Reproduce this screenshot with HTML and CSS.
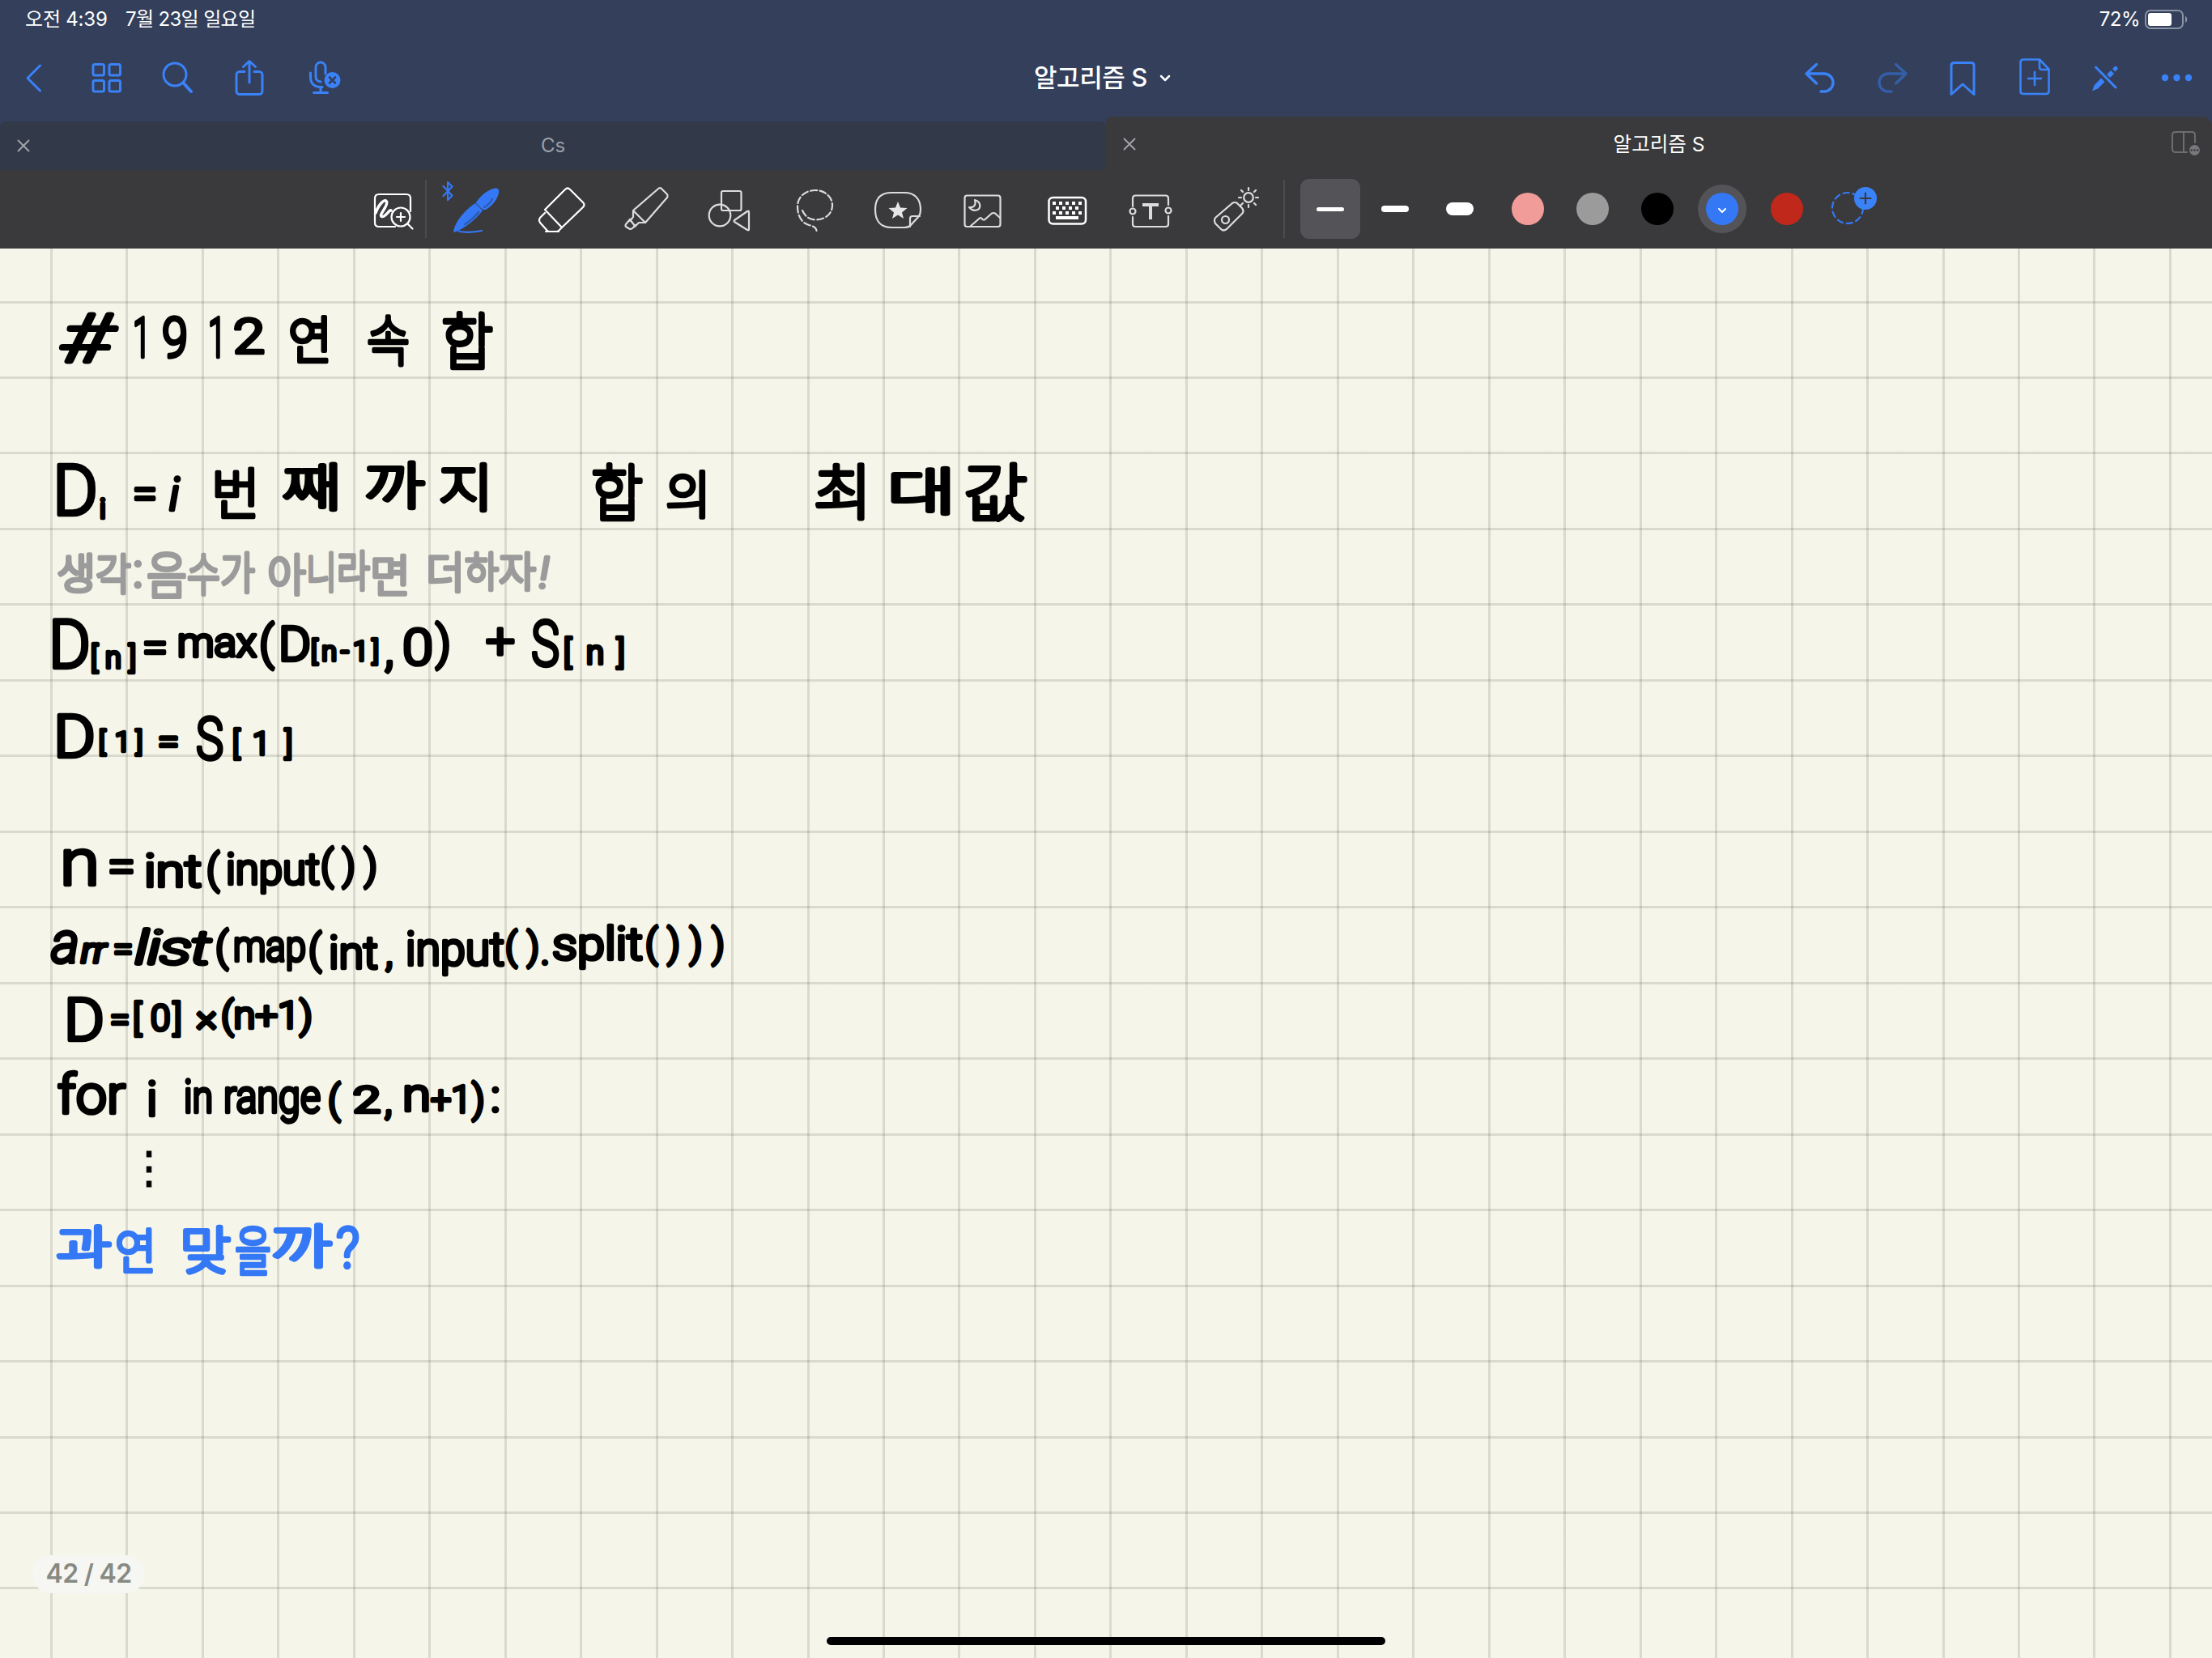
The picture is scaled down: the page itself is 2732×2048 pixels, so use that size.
FILE: index.html
```html
<!DOCTYPE html>
<html lang="ko">
<head>
<meta charset="utf-8">
<title>알고리즘 S</title>
<link rel="stylesheet" href="styles.css">
</head>
<body>
<header class="top">
  <div class="status">
    <span class="clock">오전 4:39</span>
    <span class="date">7월 23일 일요일</span>
    <span class="battery-text">72%</span>
    <svg class="battery" viewBox="2648 11 56 26"><rect x="2650" y="13" width="46" height="22" rx="6" fill="none" stroke="#8b92a2" stroke-width="2"/><rect x="2653" y="16" width="29" height="16" rx="3" fill="#fff"/><path d="M2699 20c3 1 3 7 0 8z" fill="#8b92a2"/></svg>
  </div>
  <nav class="nav">
    <div class="group left">
      <svg viewBox="12 66 60 60"><path d="M49.500 81L34 96.500L49.500 112"/></svg>
      <svg viewBox="101 66 60 60"><rect x="115" y="79.500" width="13.500" height="13.500" rx="2"/><rect x="135" y="79.500" width="13.500" height="13.500" rx="2"/><rect x="115" y="99.500" width="13.500" height="13.500" rx="2"/><rect x="135" y="99.500" width="13.500" height="13.500" rx="2"/></svg>
      <svg viewBox="190 66 60 60"><circle cx="216" cy="92" r="14"/><path d="M227 103L236 113" stroke-width="4"/></svg>
      <svg viewBox="279 66 60 60"><path d="M302 88.500h-6a4 4 0 0 0-4 4v20a4 4 0 0 0 4 4h24a4 4 0 0 0 4-4v-20a4 4 0 0 0-4-4h-6M308 102V76M300.500 82.500L308 75.500L315.500 82.500"/></svg>
      <svg viewBox="368 66 60 60"><path d="M402 91V83a6 6 0 0 0-12 0V95q0 5 6 6M383.500 90v5q0 12 12.500 12.500h2M396 108v6M387.500 114.500h17"/><circle cx="410.500" cy="99" r="10" fill="#3a82f7" stroke="none"/><path class="cut" d="M407 95.500l7 7m0-7l-7 7"/></svg>
    </div>
    <div class="title">알고리즘 S <svg viewBox="1430 88 18 16"><path d="M1434 94l5 5l5-5"/></svg></div>
    <div class="group right">
      <svg viewBox="2218 66 60 60"><path d="M2243.500 79.500L2231 91L2243.500 103M2231 91h22a11 11 0 0 1 0 22h-4" stroke-width="3.400"/></svg>
      <svg class="off" viewBox="2306 66 60 60"><path d="M2341.500 79.500L2354 91L2341.500 103M2354 91h-22a11 11 0 0 0 0 22h4" stroke-width="3.400"/></svg>
      <svg viewBox="2394 66 60 60"><path d="M2410 116.500V81q0-3.500 3.500-3.500h21q3.500 0 3.500 3.500V116.500L2424 104z"/></svg>
      <svg viewBox="2482 66 60 60"><path d="M2519 73.500h-20q-3.500 0-3.500 3.500v35.500q0 3.500 3.500 3.500h28q3.500 0 3.500-3.500v-27zM2519 74v9q0 3 3 3h8M2513 89v16M2505 97h16" stroke-width="2.600"/></svg>
      <svg viewBox="2570 66 60 60"><path d="M2588.500 83L2613 108" stroke-width="3"/><path d="M2595 96.500l4.500 4.500-8.500 8.500-7 3 2.500-7zM2602 92l5-5 4 4-5 5zM2609 85l2-2q2-2.500 4 0 1.500 2-1 4l-1.500 1.500z" fill="#3a82f7" stroke="none"/></svg>
      <svg viewBox="2658 66 60 60"><g fill="#3a82f7" stroke="none"><circle cx="2674" cy="96" r="4.200"/><circle cx="2688.500" cy="96" r="4.200"/><circle cx="2703" cy="96" r="4.200"/></g></svg>
    </div>
  </nav>
  <div class="tabs">
    <div class="tab idle"><svg class="close" viewBox="0 0 16 16"><path d="M1.500 1.500l13 13m0-13l-13 13"/></svg><span>Cs</span></div>
    <div class="tab current"><svg class="close" viewBox="0 0 16 16"><path d="M1.500 1.500l13 13m0-13l-13 13"/></svg><span>알고리즘 S</span>
      <svg class="split" viewBox="2680 160 40 36"><path d="M2711 177v-9q0-4-4-4h-20q-4 0-4 4v17q0 4 4 4h14M2697 164v25"/><circle cx="2710.500" cy="186.500" r="6.500"/><g class="eyes"><circle cx="2706.700" cy="186.500" r="1.300"/><circle cx="2710.500" cy="186.500" r="1.300"/><circle cx="2714.300" cy="186.500" r="1.300"/></g></svg>
    </div>
  </div>
</header>
<div class="tools">
  <svg class="zoomer" viewBox="446 220 79 80"><path d="M488 280h-20q-5 0-5-5V245q0-5 5-5h34q5 0 5 5v16"/><path d="M464 263C467 254 475 244 477.500 249S467 266 471.500 267.500S481 258 483 260" stroke-width="3.500"/><circle cx="495" cy="268" r="11.500"/><path d="M490 268h10M495 263v10M503.500 276.500l6 6"/></svg>
  <i class="rule"></i>
  <div class="pens">
    <svg viewBox="545 220 80 80"><path d="M547.500 230l11 11.500-5.500 5.500v-22l5.500 5.500-11 11.500" fill="none" stroke="#3478f6" stroke-width="2.200"/><path d="M560.500 284C563 272 577 257 587 251L596 260C588 271 573 282 564 286Q559 288 560.500 284zM588 250C594 241 604 233 612 232.500Q617 232 616 238C615 246 607 255 600 259Q597 260 594 257L589 252Q587.500 251 588 250z" fill="#3478f6" stroke="none"/><path d="M598 256q6-3 10-10M574 277q10-6 17-15" stroke="#2b5cb4" stroke-width="2.500"/><path d="M567 286q14 2 28-1" stroke="#3478f6"/></svg>
    <svg class="bright" viewBox="649 220 80 80"><path d="M698 234q3-3 6 0l16 16q3 3 0 6L694 281L673 259zM673 263l-6 6q-2 3 0 6l9 10q1 1 3 1h8q2 0 3-1l4-4M674 286h16"/></svg>
    <svg viewBox="753 220 80 80"><path d="M812 234q3-3 5-1l7 7q1 2 0 4L797 275L782 260zM782 260v8l-4 5M797 275h-8l-5 5M778 271l-5 6q-1 2 0 3l5 3q2 0 3-1l4-4M778 271l6 8"/></svg>
    <svg viewBox="857 220 80 80"><rect x="891" y="236" width="24.500" height="24" rx="2"/><circle cx="889" cy="266" r="13.300"/><path d="M923 261q2-1 2 1v21q0 2-2 1l-16-10q-1-1 0-2z"/></svg>
    <svg viewBox="961 220 80 80"><path d="M991 260q5 11 16 11.500c13 0 21-8 21-18s-9-18.500-21-18.500-22 8-22 20c0 14 7 21 14 23q9 2 9.500 7" stroke-dasharray="8 3.500"/></svg>
    <svg viewBox="1065 220 80 80"><path d="M1101 238h16c13 0 20 8 20 21q0 5-2 8l-11 12q-3 2-7 2h-16c-13 0-20-8-20-22s7-21 20-21zM1124 280v-10q0-3 3-3h9"/><path d="M1109 249l3 7.500 8.500.500-6.500 5.500 2 7.500-7-4.500-7 4.500 2-7.500-6.500-5.500 8.500-.500z" fill="#e6e6e8" stroke="none"/></svg>
    <svg viewBox="1169 220 80 80"><rect x="1191.500" y="241.500" width="44" height="38.500" rx="3"/><path d="M1199 279l11-9.500q2-1 4 2l2 0 9-8q2-1 4 0l6 5.500M1204 247c5 1 7 5 6 9s-8 6-13 0c5 1 9-2 7-9z"/></svg>
    <svg class="bright" viewBox="1273 220 80 80"><rect x="1295.500" y="244" width="45.500" height="32.500" rx="5" stroke-width="2.500"/><path d="M1300 251h37M1304 257h31M1300 263h37" stroke-width="4" stroke-dasharray="4 4" stroke-linecap="butt"/><path d="M1304 269h28" stroke-width="4" stroke-linecap="butt"/></svg>
    <svg viewBox="1377 220 80 80"><path d="M1399 255v-10q0-3.500 3.500-3.500h37q3.500 0 3.500 3.500v8M1443 267v10q0 3-3.500 3h-37q-3.500 0-3.500-3v-9"/><circle cx="1399" cy="261" r="3.500"/><circle cx="1443" cy="260" r="3.500"/><path d="M1411 253h20M1421 253v18" stroke-width="4" stroke-linecap="butt"/></svg>
    <svg viewBox="1481 220 80 80"><path d="M1522 251q3-2 6 0l6 6q3 4 0 7l-19 19q-4 3-7 0l-7-7q-2-4 0-7zM1532 254l3-3"/><circle cx="1513.500" cy="271.500" r="4.500"/><circle cx="1542" cy="244" r="5.800"/><path d="M1542 232v3M1542 253v3M1530 244h3M1551 244h3M1533 235l2 2M1549 251l2 2M1551 235l-2 2"/></svg>
  </div>
  <i class="rule end"></i>
  <div class="sizes"><b class="size on"><i class="thin"></i></b><b class="size"><i class="mid"></i></b><b class="size"><i class="thick"></i></b></div>
  <div class="inks">
    <b class="ink"><i class="pink"></i></b><b class="ink"><i class="grey"></i></b><b class="ink"><i class="black"></i></b>
    <b class="ink on"><i class="blue"><svg viewBox="0 0 12 8"><path d="M2 2l4 4l4-4"/></svg></i></b><b class="ink"><i class="red"></i></b>
    <svg class="add" viewBox="2257 228 60 60"><circle cx="2282" cy="257" r="19" stroke-dasharray="7 4.930"/><circle cx="2304" cy="245" r="14" fill="#3a82f7" stroke="none"/><path d="M2297.500 245h13M2304 238.500v13" stroke="#3a3a3c"/></svg>
  </div>
</div>
<main class="page">
<svg class="ink-layer" viewBox="0 307 2732 1741">
  <g class="hand">
    <text class="wide" x="76" y="446" font-size="82" textLength="60" lengthAdjust="spacingAndGlyphs" font-style="italic">#</text>
    <text x="164" y="441" font-size="68" textLength="22" lengthAdjust="spacingAndGlyphs">1</text>
    <text x="200" y="441" font-size="68" textLength="32" lengthAdjust="spacingAndGlyphs">9</text>
    <text x="257" y="441" font-size="68" textLength="22" lengthAdjust="spacingAndGlyphs">1</text>
    <text x="288" y="436" font-size="60" textLength="39" lengthAdjust="spacingAndGlyphs">2</text>
    <text x="356" y="443" font-size="63" textLength="54" lengthAdjust="spacingAndGlyphs">연</text>
    <text x="453" y="446" font-size="68" textLength="53" lengthAdjust="spacingAndGlyphs">속</text>
    <text class="wide" x="545" y="450" font-size="76" textLength="64" lengthAdjust="spacingAndGlyphs">합</text>

    <text x="65" y="636" font-size="87" textLength="56" lengthAdjust="spacingAndGlyphs">D</text>
    <text x="123" y="640" font-size="34">i</text>
    <text x="164" y="628" font-size="54" textLength="30" lengthAdjust="spacingAndGlyphs">=</text>
    <text x="209" y="630" font-size="56" font-style="italic">i</text>
    <text x="261" y="635" font-size="68" textLength="60" lengthAdjust="spacingAndGlyphs">번</text>
    <text class="wide" x="349" y="625" font-size="62" textLength="73" lengthAdjust="spacingAndGlyphs">째</text>
    <text class="wide" x="450" y="623" font-size="62" textLength="74" lengthAdjust="spacingAndGlyphs">까</text>
    <text class="wide" x="542" y="625" font-size="63" textLength="67" lengthAdjust="spacingAndGlyphs">지</text>
    <text class="wide" x="730" y="637" font-size="76" textLength="64" lengthAdjust="spacingAndGlyphs">합</text>
    <text x="822" y="634" font-size="63" textLength="56" lengthAdjust="spacingAndGlyphs">의</text>
    <text class="wide" x="1005" y="635" font-size="74" textLength="72" lengthAdjust="spacingAndGlyphs">최</text>
    <text class="wide" x="1096" y="630" font-size="62" textLength="84" lengthAdjust="spacingAndGlyphs">대</text>
    <text class="wide" x="1190" y="637" font-size="77" textLength="79" lengthAdjust="spacingAndGlyphs">값</text>

    <text x="60" y="825" font-size="83" textLength="52" lengthAdjust="spacingAndGlyphs">D</text>
    <text x="112" y="825" font-size="36" textLength="56">[n]</text>
    <text x="176" y="818" font-size="54" textLength="31" lengthAdjust="spacingAndGlyphs">=</text>
    <text x="219" y="811" font-size="50" textLength="98" lengthAdjust="spacingAndGlyphs">max</text>
    <text x="320" y="814" font-size="58">(</text>
    <text x="344" y="816" font-size="60" textLength="40" lengthAdjust="spacingAndGlyphs">D</text>
    <text x="384" y="816" font-size="34" textLength="84">[n-1]</text>
    <text x="475" y="823" font-size="60">,</text>
    <text x="497" y="821" font-size="62" textLength="38" lengthAdjust="spacingAndGlyphs">0</text>
    <text x="538" y="814" font-size="58">)</text>
    <text x="600" y="813" font-size="62" textLength="36" lengthAdjust="spacingAndGlyphs">+</text>
    <text x="656" y="822" font-size="78" textLength="35" lengthAdjust="spacingAndGlyphs">S</text>
    <text x="696 724 762" y="820" font-size="40">[n]</text>

    <text x="66" y="935" font-size="72" textLength="52" lengthAdjust="spacingAndGlyphs">D</text>
    <text x="122 142 168" y="928" font-size="34">[1]</text>
    <text x="195" y="931" font-size="44" textLength="26" lengthAdjust="spacingAndGlyphs">=</text>
    <text x="242" y="938" font-size="72" textLength="34" lengthAdjust="spacingAndGlyphs">S</text>
    <text x="287 312 352" y="932" font-size="38">[1]</text>

    <text x="74" y="1093" font-size="80" textLength="49" lengthAdjust="spacingAndGlyphs">n</text>
    <text x="133" y="1090" font-size="58" textLength="34" lengthAdjust="spacingAndGlyphs">=</text>
    <text x="178" y="1095" font-size="56" textLength="71" lengthAdjust="spacingAndGlyphs">int</text>
    <text x="255" y="1091" font-size="50">(</text>
    <text x="279" y="1092" font-size="54" textLength="116" lengthAdjust="spacingAndGlyphs">input</text>
    <text x="396" y="1086" font-size="50" textLength="70">())</text>

    <text x="63" y="1189" font-size="72" textLength="35" lengthAdjust="spacingAndGlyphs" font-style="italic">a</text>
    <text x="100" y="1189" font-size="42" textLength="31" lengthAdjust="spacingAndGlyphs" font-style="italic">rr</text>
    <text x="140" y="1187" font-size="42" textLength="24" lengthAdjust="spacingAndGlyphs">=</text>
    <text class="wide" x="167" y="1190" font-size="56" textLength="93" lengthAdjust="spacingAndGlyphs" font-style="italic">list</text>
    <text x="266" y="1187" font-size="50">(</text>
    <text x="288" y="1187" font-size="54" textLength="90" lengthAdjust="spacingAndGlyphs">map</text>
    <text x="381" y="1190" font-size="50">(</text>
    <text x="406" y="1196" font-size="56" textLength="61" lengthAdjust="spacingAndGlyphs">int</text>
    <text x="476" y="1193" font-size="48">,</text>
    <text x="501" y="1192" font-size="58" textLength="122" lengthAdjust="spacingAndGlyphs">input</text>
    <text x="624" y="1185" font-size="46" textLength="42">()</text>
    <text x="668" y="1191" font-size="44">.</text>
    <text x="682" y="1185" font-size="56" textLength="112" lengthAdjust="spacingAndGlyphs">split</text>
    <text x="797" y="1182" font-size="48" textLength="98">()))</text>

    <text x="79" y="1285" font-size="72" textLength="50" lengthAdjust="spacingAndGlyphs">D</text>
    <text x="136" y="1274" font-size="42" textLength="24" lengthAdjust="spacingAndGlyphs">=</text>
    <text x="164 186 214" y="1273" font-size="44">[0]</text>
    <text x="242" y="1273" font-size="46" textLength="26" lengthAdjust="spacingAndGlyphs">×</text>
    <text x="273" y="1270" font-size="47" textLength="113" lengthAdjust="spacingAndGlyphs">(n+1)</text>

    <text x="71" y="1375" font-size="66" textLength="84" lengthAdjust="spacingAndGlyphs">for</text>
    <text x="181" y="1378" font-size="60">i</text>
    <text x="227" y="1374" font-size="56" textLength="36" lengthAdjust="spacingAndGlyphs">in</text>
    <text x="276" y="1374" font-size="58" textLength="120" lengthAdjust="spacingAndGlyphs">range</text>
    <text x="405" y="1375" font-size="48">(</text>
    <text x="436" y="1374" font-size="44" textLength="34" lengthAdjust="spacingAndGlyphs">2</text>
    <text x="475" y="1376" font-size="48">,</text>
    <text x="497" y="1372" font-size="58" textLength="35" lengthAdjust="spacingAndGlyphs">n</text>
    <text x="532" y="1374" font-size="46" textLength="50" lengthAdjust="spacingAndGlyphs">+1</text>
    <text x="583" y="1374" font-size="48">)</text>
    <text x="606" y="1373" font-size="56">:</text>
    <text class="dots" x="184" y="1461" font-size="54" text-anchor="middle">⋮</text>
  </g>
  <g class="hand pencil">
    <text x="70" y="727" font-size="51" textLength="48" lengthAdjust="spacingAndGlyphs">생</text>
    <text x="118" y="729" font-size="53" textLength="44" lengthAdjust="spacingAndGlyphs">각</text>
    <text x="164" y="725" font-size="60">:</text>
    <text x="181" y="734" font-size="62" textLength="50" lengthAdjust="spacingAndGlyphs">음</text>
    <text x="231" y="730" font-size="57" textLength="41" lengthAdjust="spacingAndGlyphs">수</text>
    <text x="272" y="728" font-size="54" textLength="43" lengthAdjust="spacingAndGlyphs">가</text>
    <text x="330" y="730" font-size="55" textLength="48" lengthAdjust="spacingAndGlyphs">아</text>
    <text x="378" y="727" font-size="53" textLength="38" lengthAdjust="spacingAndGlyphs">니</text>
    <text x="416" y="725" font-size="53" textLength="41" lengthAdjust="spacingAndGlyphs">라</text>
    <text x="457" y="731" font-size="55" textLength="50" lengthAdjust="spacingAndGlyphs">면</text>
    <text x="526" y="727" font-size="53" textLength="48" lengthAdjust="spacingAndGlyphs">더</text>
    <text x="574" y="725" font-size="51" textLength="42" lengthAdjust="spacingAndGlyphs">하</text>
    <text x="616" y="725" font-size="51" textLength="46" lengthAdjust="spacingAndGlyphs">자</text>
    <text x="666" y="726" font-size="54" font-style="italic">!</text>
  </g>
  <g class="hand blue-pen">
    <text class="wide" x="70" y="1560" font-size="55" textLength="67" lengthAdjust="spacingAndGlyphs">과</text>
    <text x="142" y="1568" font-size="60" textLength="51" lengthAdjust="spacingAndGlyphs">연</text>
    <text class="wide" x="222" y="1567" font-size="63" textLength="63" lengthAdjust="spacingAndGlyphs">맞</text>
    <text x="290" y="1570" font-size="67" textLength="45" lengthAdjust="spacingAndGlyphs">을</text>
    <text class="wide" x="335" y="1560" font-size="57" textLength="74" lengthAdjust="spacingAndGlyphs">까</text>
    <text x="415" y="1566" font-size="70" textLength="29" lengthAdjust="spacingAndGlyphs">?</text>
  </g>
</svg>
<div class="count">42 / 42</div>
<div class="home"></div>
</main>
</body>
</html>
```
FILE: styles.css
```css
* { box-sizing: border-box; }
body {
  margin: 0;
  width: 2732px;
  height: 2048px;
  overflow: hidden;
  display: flex;
  flex-direction: column;
  font-family: Inter, "Noto Sans CJK KR", sans-serif;
  color: #fff;
  background: #f6f5e9;
}
svg { display: block; flex: none; fill: none; stroke-linecap: round; stroke-linejoin: round; }

.top { height: 210px; background: #333f5b; display: flex; flex-direction: column; flex: none; }
.status { height: 48px; padding: 0 28px 0 31px; display: flex; align-items: center; font-size: 24px; line-height: 48px; }
.clock { width: 124px; white-space: nowrap; letter-spacing: -.2px; }
.date { letter-spacing: -.65px; }
.battery-text { margin-left: auto; margin-right: 5px; letter-spacing: -.5px; }
.battery { width: 56px; height: 26px; }

.nav { height: 96px; padding: 0 14px 0 12px; display: grid; grid-template-columns: 1fr auto 1fr; align-items: center; }
.group { display: flex; }
.group svg { width: 60px; height: 60px; stroke: #3a82f7; stroke-width: 3; }
.left { gap: 29px; }
.right { gap: 28px; justify-content: flex-end; }
.group .off { stroke: #345fa8; }
.group .cut { stroke: #333f5b; stroke-width: 2.6; }
.title { display: flex; align-items: center; margin: 0 5px 5px 0; font-size: 31px; font-weight: 500; letter-spacing: -.4px; white-space: nowrap; }
.title svg { width: 18px; height: 16px; margin: 4px 0 0 13px; stroke: #fff; stroke-width: 2.5; }

.tabs { flex: 1; display: flex; align-items: flex-end; }
.tab { width: 1366px; display: grid; grid-template-columns: 60px 1fr 60px; align-items: center; text-align: center; font-size: 24px; line-height: 36px; }
.idle { height: 60px; background: #323a49; color: #9c9fa8; border-radius: 8px 8px 0 0; }
.current { height: 66px; background: #3a3a3c; border-radius: 8px 12px 0 0; font-size: 24.5px; }
.current span { padding-top: 2px; }
.close { width: 16px; height: 16px; margin-left: 21px; stroke: #a3a4aa; stroke-width: 1.9; }
.current .close { margin-top: 2px; }
.split { width: 40px; height: 36px; margin-left: 8px; stroke: #6d6d72; stroke-width: 2; }
.split circle { fill: #77777c; stroke: none; }
.split .eyes circle { fill: #3a3a3c; }

.tools { height: 97px; flex: none; background: #3a3a3c; padding: 0 0 1px 446px; display: flex; align-items: center; }
.tools svg { stroke: #dcdcde; stroke-width: 2.2; }
.tools .zoomer { width: 79px; height: 80px; stroke: #fff; margin-top: 3px; }
.rule { width: 2px; height: 72px; background: #4c4c50; margin-right: 18px; }
.rule.end { margin: 0 19px 0 24px; }
.pens { display: flex; gap: 24px; margin-top: 3px; }
.pens svg { width: 80px; height: 80px; }
.tools .bright { stroke: #fff; }
.sizes { display: flex; gap: 6px; }
.size { width: 74px; height: 74px; border-radius: 11px; display: grid; place-items: center; }
.size.on { background: #545358; }
.size i { width: 34px; background: #fff; border-radius: 8px; }
.thin { height: 5px; }
.mid { height: 8px; }
.thick { height: 16px; }
.inks { display: flex; gap: 20px; margin-left: 17px; }
.ink { width: 60px; height: 60px; border-radius: 50%; display: grid; place-items: center; }
.ink.on { background: #545358; }
.ink i { width: 40px; height: 40px; border-radius: 50%; display: grid; place-items: center; }
.pink { background: #f19c99; }
.grey { background: #9b9b9b; }
.black { background: #000; }
.blue { background: #3478f6; }
.red { background: #bf281b; }
.blue svg { width: 12px; height: 8px; margin-top: 3px; stroke: #fff; stroke-width: 2; }
.tools .add { width: 60px; height: 60px; overflow: visible; stroke: #3478f6; }

.page {
  flex: 1;
  position: relative;
  background:
    repeating-linear-gradient(to right, transparent 0 61.8px, rgba(72, 74, 66, .16) 61.8px 64.8px, transparent 64.8px 93.47px),
    repeating-linear-gradient(to bottom, transparent 0 64.5px, rgba(72, 74, 66, .16) 64.5px 67.5px, transparent 67.5px 93.47px),
    #f6f5e9;
}
.ink-layer { width: 2732px; height: 1741px; }
.hand { font-family: Roboto, "Noto Sans CJK KR", sans-serif; font-weight: 300; fill: #000; stroke: #000; stroke-width: 4.6px; }
.wide { font-weight: 100; stroke-width: 6px; }
.pencil { fill: #9b9b9b; stroke: #9b9b9b; }
.blue-pen { fill: #3478f6; stroke: #3478f6; }
.dots { font-family: "DejaVu Sans", sans-serif; stroke-width: 1px; }
.count {
  position: absolute;
  left: 40px;
  bottom: 80px;
  width: 139px;
  height: 47px;
  border-radius: 23px;
  background: #f6f6f2;
  color: #878a83;
  font-size: 32px;
  font-weight: 600;
  line-height: 46px;
  letter-spacing: -.7px;
  text-align: center;
  white-space: nowrap;
}
.home { position: absolute; left: 1021px; bottom: 16px; width: 690px; height: 10px; border-radius: 5px; background: #000; }
```
